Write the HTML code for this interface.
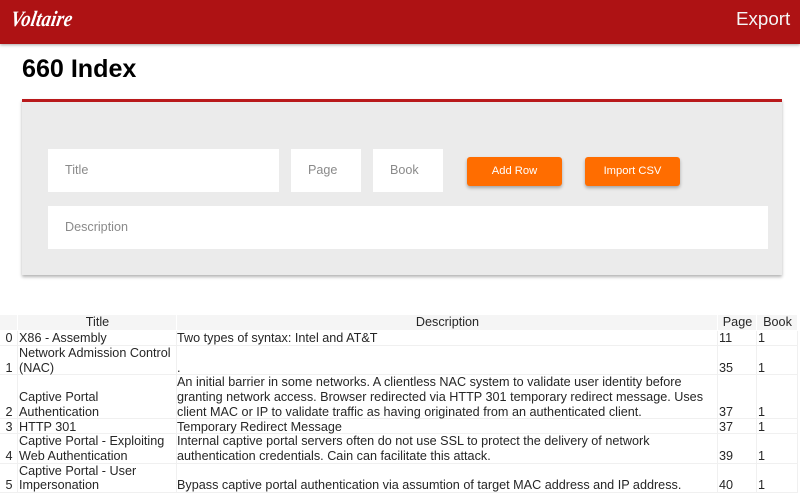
<!DOCTYPE html>
<html><head><meta charset="utf-8">
<style>
html,body{margin:0;padding:0;background:#fff;width:800px;height:493px;overflow:hidden;font-family:"Liberation Sans",Arial,sans-serif;}
.a{position:absolute}
#nav{left:0;top:0;width:800px;height:44px;background:#ae1214;box-shadow:0 1px 3px rgba(0,0,0,.35)}
#logo{left:11px;top:4px;color:#fff;font:italic bold 22px/30px "Liberation Serif",serif;transform-origin:left center;transform:skewX(-10deg) scaleX(.85);letter-spacing:.2px}
#exp{left:736px;top:6px;color:#f5f5f5;font-size:18.8px;line-height:26px}
h1{position:absolute;left:22px;top:53px;margin:0;font-size:25.1px;line-height:32px;font-weight:700;color:#000}
#card{left:22px;top:99px;width:760px;height:173px;background:#ebebeb;border-top:3px solid #b9191b;box-shadow:0 2px 3px rgba(0,0,0,.3)}
.i{position:absolute;background:#fff;color:#8a8a8a;font-size:12.6px;line-height:42px;height:43px;box-sizing:border-box;padding-left:17px}
.b{position:absolute;top:157px;width:95px;height:29px;background:#ff6d00;color:#fff;border-radius:3px;font-size:11.2px;line-height:28px;text-align:center;box-shadow:0 2px 3px rgba(0,0,0,.3)}
table{position:absolute;left:0;top:315px;width:798px;table-layout:fixed;border-collapse:separate;border-spacing:0;font-size:12.63px;line-height:14.67px;color:#262626}
th{background:#f5f5f5;font-weight:400;padding:0;text-align:center;height:16px;box-sizing:border-box;vertical-align:top;box-shadow:inset -1px 0 #fff,inset 0 -1px #fff;white-space:nowrap}
td{padding:0 0 0 1px;vertical-align:bottom;box-sizing:border-box;white-space:nowrap;box-shadow:inset 0 -1px #f0f0f0,inset -1px 0 #f0f0f0}
td:first-child{text-align:center;padding:0}
td:nth-child(3){padding-left:0}
</style></head>
<body>
<div class="a" id="nav"></div>
<div class="a" id="logo">Voltaire</div>
<div class="a" id="exp">Export</div>
<h1>660 Index</h1>
<div class="a" id="card"></div>
<div class="i" style="left:48px;top:149px;width:231px">Title</div>
<div class="i" style="left:291px;top:149px;width:70px">Page</div>
<div class="i" style="left:373px;top:149px;width:70px">Book</div>
<div class="b" style="left:467px">Add Row</div>
<div class="b" style="left:585px">Import CSV</div>
<div class="i" style="left:48px;top:206px;width:720px">Description</div>
<table>
<colgroup><col style="width:18px"><col style="width:159px"><col style="width:541px"><col style="width:39px"><col style="width:41px"></colgroup>
<tr><th></th><th>Title</th><th>Description</th><th>Page</th><th>Book</th></tr>
<tr><td style="height:15px">0</td><td>X86 - Assembly</td><td>Two types of syntax: Intel and AT&amp;T</td><td>11</td><td>1</td></tr>
<tr><td style="height:29px">1</td><td>Network Admission Control<br>(NAC)</td><td>.</td><td>35</td><td>1</td></tr>
<tr><td style="height:44px">2</td><td>Captive Portal<br>Authentication</td><td>An initial barrier in some networks. A clientless NAC system to validate user identity before<br>granting network access. Browser redirected via HTTP 301 temporary redirect message. Uses<br>client MAC or IP to validate traffic as having originated from an authenticated client.</td><td>37</td><td>1</td></tr>
<tr><td style="height:15px">3</td><td>HTTP 301</td><td>Temporary Redirect Message</td><td>37</td><td>1</td></tr>
<tr><td style="height:29px">4</td><td>Captive Portal - Exploiting<br>Web Authentication</td><td>Internal captive portal servers often do not use SSL to protect the delivery of network<br>authentication credentials. Cain can facilitate this attack.</td><td>39</td><td>1</td></tr>
<tr><td style="height:29px">5</td><td>Captive Portal - User<br>Impersonation</td><td>Bypass captive portal authentication via assumtion of target MAC address and IP address.</td><td>40</td><td>1</td></tr>
</table>
</body></html>
